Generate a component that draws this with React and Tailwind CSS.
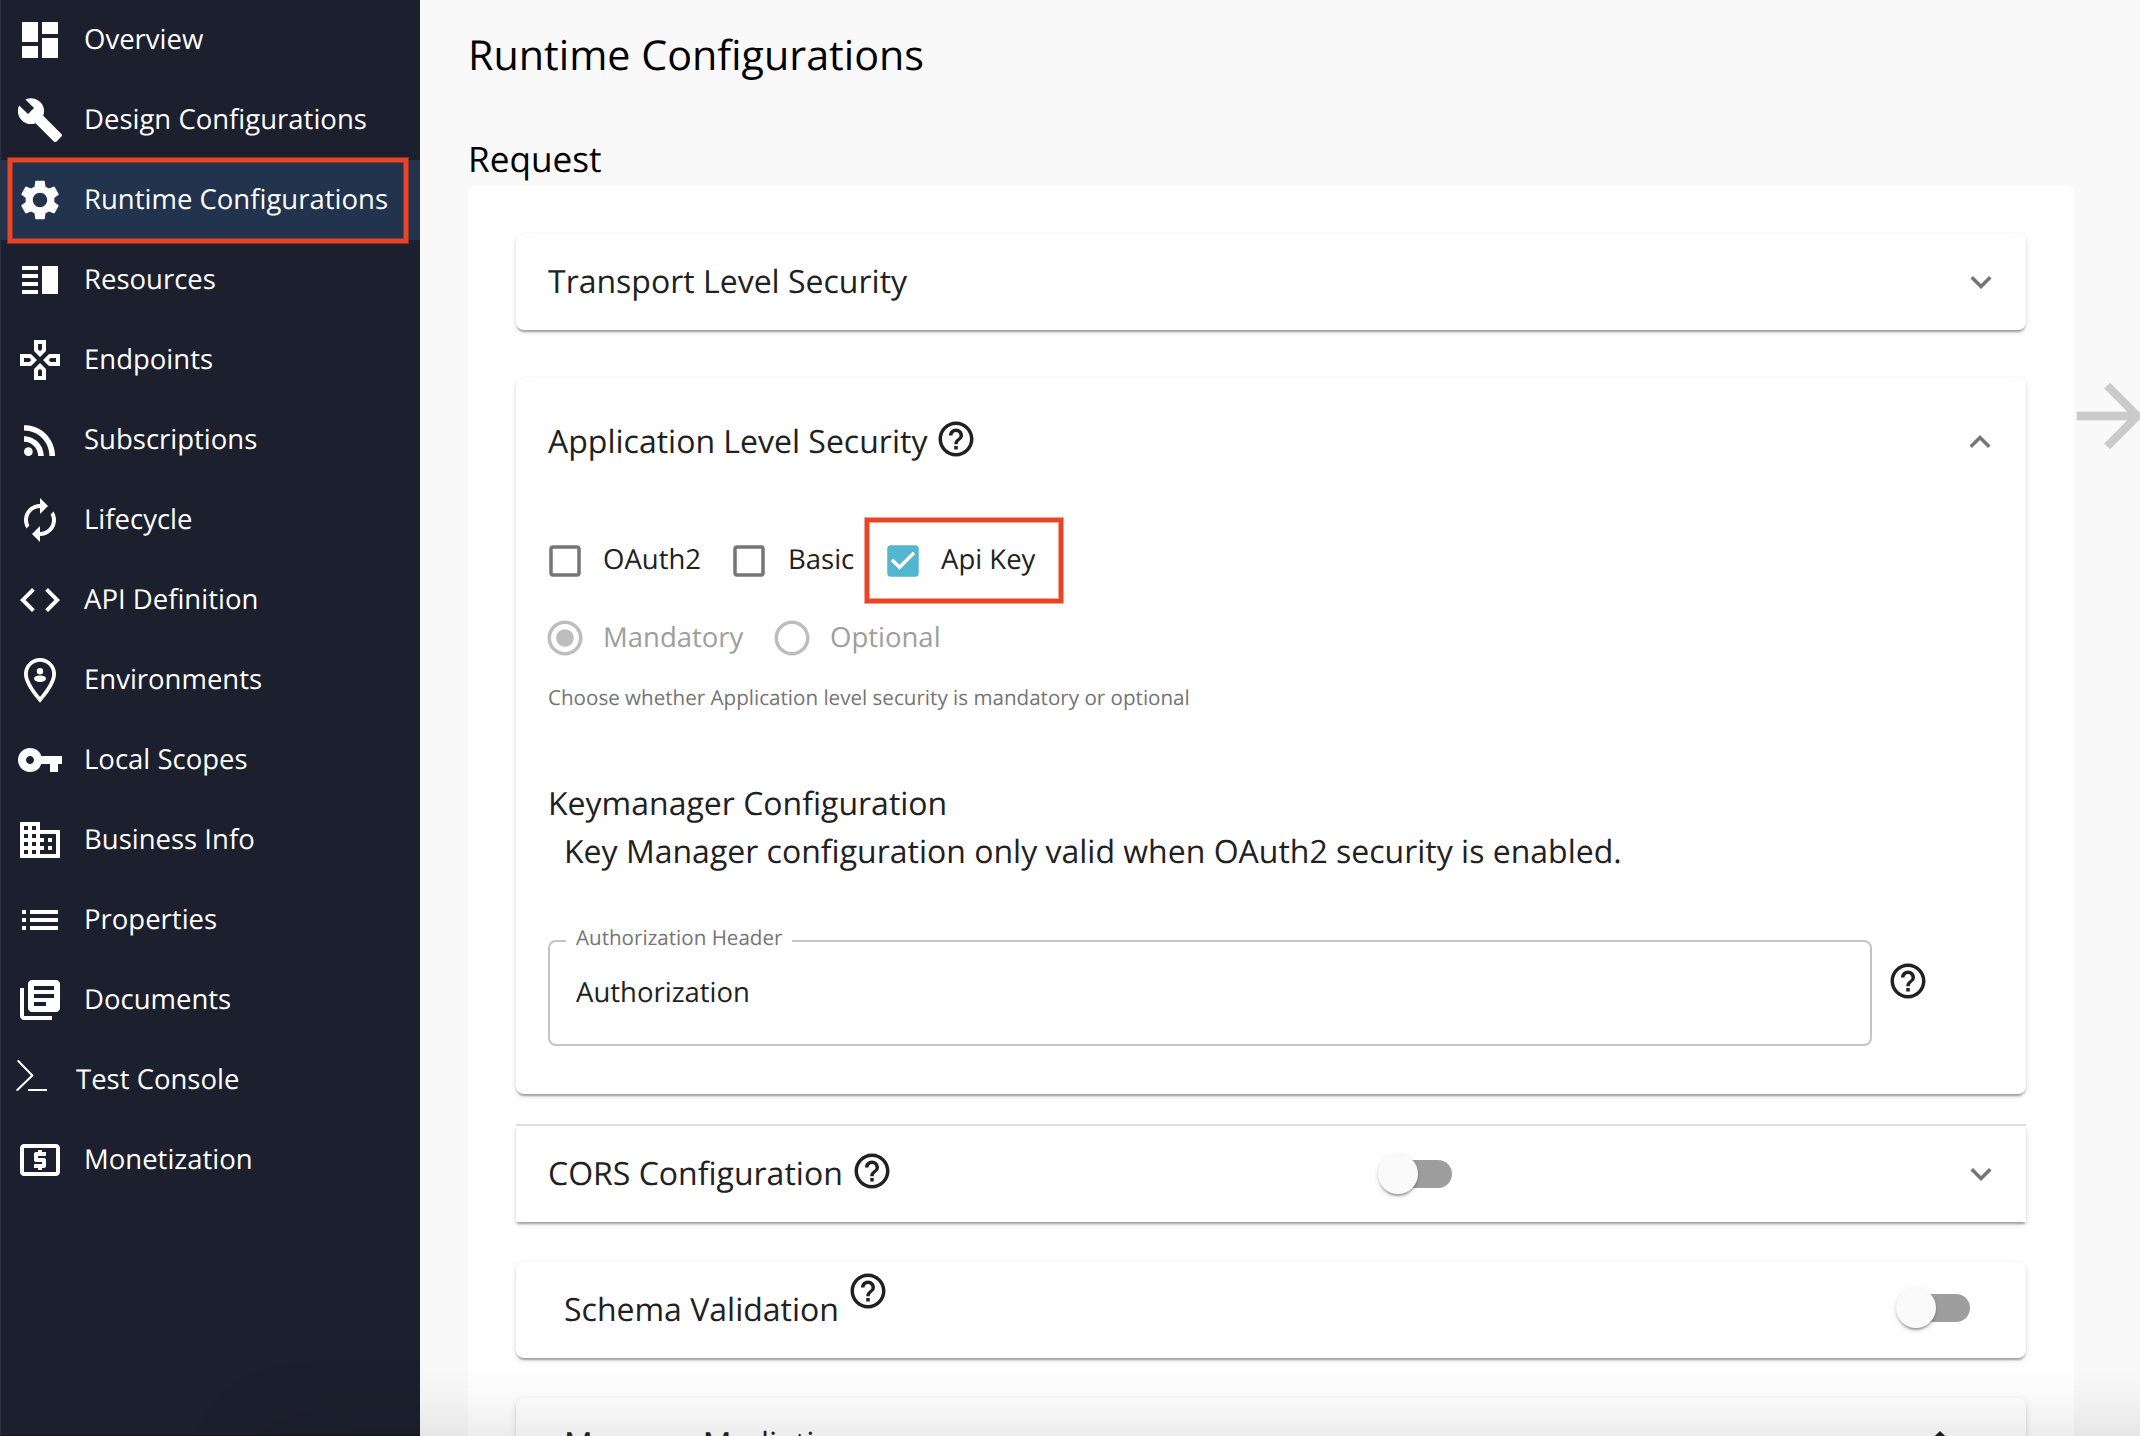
import React from "react";
import {
  MdDashboard, MdBuild, MdSettings, MdVerticalSplit, MdOutlineGamepad, MdRssFeed, MdAutorenew, MdCode,
  MdVpnKey, MdBusiness, MdList, MdLibraryBooks, MdLocalAtm,
  MdHelpOutline, MdExpandMore, MdExpandLess, MdCheckBox, MdCheckBoxOutlineBlank,
  MdRadioButtonChecked, MdRadioButtonUnchecked, MdArrowForward,
} from "react-icons/md";

function ConsoleIcon() {
  return (
    <svg className="h-[36px] w-[36px]" viewBox="0 0 36 36" fill="none" stroke="currentColor" strokeWidth="2">
      <path d="M2.3 2 16.3 16.5 1.3 31" strokeLinecap="round" strokeLinejoin="round" />
      <path d="M12 31h19" />
    </svg>
  );
}

function PersonPinIcon({ className }) {
  return (
    <svg className={className} viewBox="0 0 24 24" fill="currentColor">
      <path
        d="M12 1.95A7.05 7.05 0 0 0 4.95 9c0 4.4 4.4 9.8 7.05 12.9 2.65-3.1 7.05-8.5 7.05-12.9A7.05 7.05 0 0 0 12 1.95z"
        fill="none"
        stroke="currentColor"
        strokeWidth="1.9"
      />
      <circle cx="12" cy="7.6" r="1.6" />
      <ellipse cx="12" cy="11.35" rx="3" ry="1.65" />
    </svg>
  );
}

function ArrowUpIcon() {
  return (
    <svg className="-mt-[6px] h-12 w-12" viewBox="0 0 24 24" fill="currentColor">
      <path d="m7 14 5-5 5 5z" stroke="currentColor" strokeWidth="0.8" strokeLinejoin="round" />
    </svg>
  );
}

const ITEMS = [
  ["Overview", MdDashboard],
  ["Design Configurations", MdBuild],
  ["Runtime Configurations", MdSettings],
  ["Resources", MdVerticalSplit],
  ["Endpoints", MdOutlineGamepad],
  ["Subscriptions", MdRssFeed],
  ["Lifecycle", MdAutorenew],
  ["API Definition", MdCode],
  ["Environments", PersonPinIcon],
  ["Local Scopes", MdVpnKey],
  ["Business Info", MdBusiness],
  ["Properties", MdList],
  ["Documents", MdLibraryBooks],
  ["Test Console", null],
  ["Monetization", MdLocalAtm],
];

const MARK =
  "absolute border-4 border-[#ec4326] shadow-[0_0_0_1px_rgba(236,67,38,0.5),inset_0_0_0_1px_rgba(236,67,38,0.5)]";

function Sidebar() {
  return (
    <nav className="h-full w-[420px] shrink-0 border-b border-l border-b-[#15171f] border-l-[#2d3040] bg-[#1c1f2d] text-[27.5px] leading-[40px] text-white">
      {ITEMS.map(([label, Icon]) =>
        Icon ? (
          <div
            key={label}
            className={
              label === "Runtime Configurations"
                ? "relative flex h-20 items-center bg-[#22334d] pl-[15px]"
                : "flex h-20 items-center pl-[15px]"
            }
          >
            <Icon className="h-12 w-12" />
            <span className="ml-5">{label}</span>
            {label === "Runtime Configurations" && (
              <div className={MARK + " top-[-2px] left-[7px] h-[85px] w-[400px]"} />
            )}
          </div>
        ) : (
          <div key={label} className="flex h-20 items-center pl-[15px]">
            <div className="mb-[6px] w-[60px]">
              <ConsoleIcon />
            </div>
            <span>{label}</span>
          </div>
        )
      )}
    </nav>
  );
}

const SHADOW =
  "bg-white shadow-[0_4px_2px_-2px_rgba(0,0,0,0.2),0_2px_2px_0_rgba(0,0,0,0.14),0_2px_6px_0_rgba(0,0,0,0.12)]";

function Help({ className = "" }) {
  return <MdHelpOutline className={"h-[42px] w-[42px] " + className} />;
}

function Toggle() {
  return (
    <div className="relative h-7 w-[68px] rounded-full bg-[#9e9e9e]">
      <div className="absolute -top-[6px] -left-[6px] h-10 w-10 rounded-full bg-[#fafafa] shadow-[0_4px_2px_-2px_rgba(0,0,0,0.2),0_2px_2px_0_rgba(0,0,0,0.14),0_2px_6px_0_rgba(0,0,0,0.12)]" />
    </div>
  );
}

export default function App() {
  return (
    <div className="relative flex h-[1436px] w-[2140px] overflow-hidden bg-[#f9f9f9] font-['Open_Sans',sans-serif] text-[#212121] [text-rendering:geometricPrecision]">
      <Sidebar />
      <main className="min-w-0 flex-1 pt-[27px] pl-12">
        <h1 className="h-[56px] text-[41.25px] leading-[56px] text-black">Runtime Configurations</h1>
        <h2 className="mt-[52px] h-[51px] text-[35.2px] leading-[48px] text-black">Request</h2>
        <div className="flex">
          <section className="h-[1260px] w-[1606px] shrink-0 rounded-t-lg bg-white px-12 pt-12">
            <div className={SHADOW + " flex h-24 items-center justify-between rounded-lg pl-8 pr-[24px]"}>
              <span className="text-[32px] leading-[48px]">Transport Level Security</span>
              <MdExpandMore className="h-[42px] w-[42px] text-[#757575]" />
            </div>

            <div className={SHADOW + " mt-12 h-[716px] rounded-lg pl-8 pr-[24px] pt-[32px]"}>
              <div className="flex h-16 items-center justify-between">
                <div className="flex items-center text-[32px] leading-[48px]">
                  Application Level Security
                  <Help className="mb-[6px] ml-2" />
                </div>
                <MdExpandLess className="mr-px h-[42px] w-[42px] text-[#757575]" />
              </div>
              <div className="mt-[47px] flex h-20 items-center text-[27.5px] leading-[40px]">
                <MdCheckBoxOutlineBlank className="-ml-[4px] h-[42px] w-[42px] text-[#757575]" />
                <span className="mb-[2px] ml-[17px] w-[125px]">OAuth2</span>
                <MdCheckBoxOutlineBlank className="h-[42px] w-[42px] text-[#757575]" />
                <span className="mb-[2px] ml-[18px] w-[77px]">Basic</span>
                <div className="relative flex h-20 items-center">
                  <MdCheckBox className="ml-[17px] h-[42px] w-[42px] text-[#53b5ce]" />
                  <span className="mb-[2px] ml-[17px]">Api Key</span>
                  <div className={MARK + " -top-[3px] left-0 h-[85px] w-[198px]"} />
                </div>
              </div>
              <div className="flex h-[74px] items-center text-[27.5px] leading-[40px] text-[#9e9e9e]">
                <MdRadioButtonChecked className="-ml-[4px] h-[42px] w-[42px] text-[#bdbdbd]" />
                <span className="ml-[17px] w-[168px]">Mandatory</span>
                <MdRadioButtonUnchecked className="h-[42px] w-[42px] text-[#bdbdbd]" />
                <span className="ml-[17px]">Optional</span>
              </div>
              <p className="mt-[9px] h-[28px] text-[20.6px] leading-[28px] text-[#757575]">
                Choose whether Application level security is mandatory or optional
              </p>
              <p className="mt-[68px] text-[32px] leading-[48px]">Keymanager Configuration</p>
              <p className="ml-4 text-[32px] leading-[48px]">Key Manager configuration only valid when OAuth2 security is enabled.</p>
              <div className="mt-[64px] flex">
                <div className="relative flex h-[106px] w-[1324px] items-center rounded-lg border-2 border-[#c4c4c4] pl-[26px] text-[27.5px]">
                  <span className="absolute -top-[18px] left-[16px] w-[226px] bg-white pl-[10px] text-[20.6px] leading-[28px] text-[#757575]">
                    Authorization Header
                  </span>
                  Authorization
                </div>
                <Help className="mt-5 ml-[15px]" />
              </div>
            </div>

            <div className={SHADOW + " relative mt-8 flex h-24 items-center pl-8 pr-[24px]"}>
              <div className="absolute -top-[2px] left-0 h-[2px] w-full bg-[#dedede]" />
              <div className="flex w-[836px] items-center">
                <span className="text-[32px] leading-[48px]">CORS Configuration</span>
                <Help className="mb-[6px] ml-2" />
              </div>
              <Toggle />
              <MdExpandMore className="ml-auto h-[42px] w-[42px] text-[#757575]" />
            </div>

            <div className={SHADOW + " mt-10 flex h-24 items-center rounded-lg pl-12 pr-[56px]"}>
              <span className="text-[32px] leading-[48px]">Schema Validation</span>
              <Help className="mb-[38px] ml-2" />
              <div className="mt-[-4px] ml-auto">
                <Toggle />
              </div>
            </div>

            <div className={SHADOW + " mt-10 flex h-24 items-start justify-between rounded-lg pl-12 pr-[62px] pt-[22px]"}>
              <span className="text-[32px] leading-[48px]">Message Mediation</span>
              <ArrowUpIcon />
            </div>
          </section>
          <MdArrowForward className="mt-[180px] -ml-[14px] h-[100px] w-[100px] shrink-0 text-[#cbcbcb]" />
        </div>
      </main>
      <div className="absolute top-full left-[262px] h-[400px] w-[2300px] shadow-[0_0_76px_0_rgba(0,0,0,0.15)]" />
    </div>
  );
}
